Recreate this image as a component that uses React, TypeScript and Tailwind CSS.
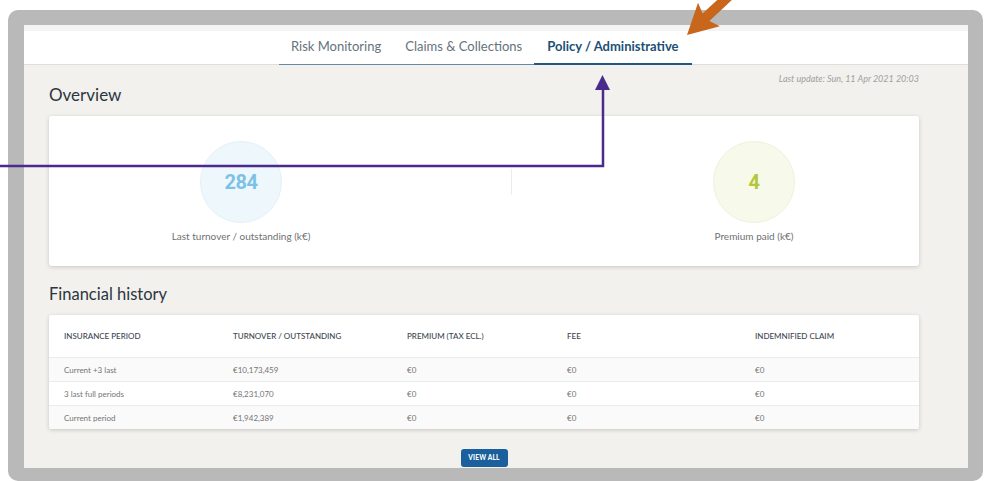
import React from "react";

const tabs = [
  { label: "Risk Monitoring", active: false },
  { label: "Claims & Collections", active: false },
  { label: "Policy / Administrative", active: true },
];

const columns = ["Insurance period", "Turnover / outstanding", "Premium (tax ecl.)", "Fee", "Indemnified claim"];

const rows = [
  ["Current +3 last", "€10,173,459", "€0", "€0", "€0"],
  ["3 last full periods", "€8,231,070", "€0", "€0", "€0"],
  ["Current period", "€1,942,389", "€0", "€0", "€0"],
];

const KpiCircle: React.FC<{ value: string; label: string; tone: "blue" | "green" }> = ({ value, label, tone }) => (
  <div className="flex flex-col items-center">
    <div
      className={`w-[82px] h-[82px] rounded-full flex items-center justify-center border ${
        tone === "blue" ? "bg-[#eef7fc] border-[#e2f0f9]" : "bg-[#f7f9ea] border-[#eef2d9]"
      }`}
    >
      <span
        className={`font-['Roboto',sans-serif] font-bold text-[20px] leading-none tracking-[-0.5px] ${
          tone === "blue" ? "text-[#7cc2e8]" : "text-[#b3c739]"
        }`}
      >
        {value}
      </span>
    </div>
    <span className="mt-[7px] text-[10px] leading-[13px] text-[#707070]">{label}</span>
  </div>
);

export default function App() {
  return (
    <div className="relative w-[989px] h-[481px] overflow-hidden bg-white font-['Lato',sans-serif]">
      {/* device frame */}
      <div className="ml-[8px] mt-[10px] w-[975px] h-[471px] bg-[#b9b9b9] rounded-[10px] pt-[15px] pl-[16px] pr-[15px] pb-[13px]">
        <div className="w-[944px] h-[443px] bg-[#f2f1ed] flex flex-col">
          <div className="h-[6px] bg-[#f4f4f4]" />
          {/* tab bar */}
          <div className="h-[34px] bg-white border-b border-[#dedede] flex pl-[255px]">
            {tabs.map((t) => (
              <div
                key={t.label}
                className={`h-[34px] flex items-center -mb-px ${
                  t.active
                    ? "px-[13px] border-b-2 border-[#1f5883] text-[#1d4f75] font-bold"
                    : "px-[12px] border-b border-[#6689a3] text-[#66727b]"
                } text-[13px]`}
              >
                <span className="pb-[1px]">{t.label}</span>
              </div>
            ))}
          </div>

          <div className="pl-[25px] pr-[49px] flex flex-col">
            <div className="pt-[8px] h-[20px] text-right text-[9px] leading-[12px] italic text-[#a0a0a0]">
              Last update: Sun, 11 Apr 2021 20:03
            </div>
            <h2 className="text-[17px] leading-[20px] text-[#2b3640]">Overview</h2>

            {/* overview card */}
            <div className="mt-[11px] h-[150px] bg-white rounded-[3px] shadow-[0_1px_4px_rgba(0,0,0,0.18)] grid grid-cols-[384px_156px_1fr] pt-[25px]">
              <KpiCircle value="284" label="Last turnover / outstanding (k€)" tone="blue" />
              <div className="flex justify-center pt-[28px]">
                <div className="w-px h-[26px] bg-[#ececec]" />
              </div>
              <KpiCircle value="4" label="Premium paid (k€)" tone="green" />
            </div>

            <h2 className="mt-[17px] text-[16.5px] leading-[22px] text-[#2b3640]">Financial history</h2>

            {/* history table */}
            <div className="mt-[10px] bg-white rounded-[3px] shadow-[0_1px_4px_rgba(0,0,0,0.18)] overflow-hidden">
              <div className="h-[42px] grid grid-cols-[169px_174px_160px_188px_1fr] pl-[15px] items-center">
                {columns.map((c) => (
                  <span key={c} className="text-[8px] uppercase font-medium text-[#3b4650]">
                    {c}
                  </span>
                ))}
              </div>
              {rows.map((r, i) => (
                <div
                  key={r[0]}
                  className={`h-[24px] grid grid-cols-[169px_174px_160px_188px_1fr] pl-[15px] items-center border-t border-[#ebebeb] ${
                    i % 2 === 0 ? "bg-[#fafafa]" : "bg-white"
                  }`}
                >
                  {r.map((cell, j) => (
                    <span key={j} className="text-[8px] text-[#747474]">
                      {cell}
                    </span>
                  ))}
                </div>
              ))}
            </div>

            <div className="mt-[20px] flex justify-center">
              <button className="w-[47px] h-[18px] rounded-[3px] bg-[#1b5f9c] text-white text-[6.5px] font-black tracking-[0.2px]">
                VIEW ALL
              </button>
            </div>
          </div>
        </div>
      </div>

      {/* callout arrows */}
      <svg className="absolute inset-0 pointer-events-none" width="989" height="481" viewBox="0 0 989 481">
        <path d="M0 166 H603 V88" fill="none" stroke="#4a2b8d" strokeWidth="2.5" />
        <polygon points="602.5,75 595,90 610,90" fill="#4a2b8d" />
        <g transform="translate(687 35) rotate(137)">
          <polygon points="0,0 -30,-16 -26,-5 -75,-5 -75,5 -26,5 -30,16" fill="#c8661c" />
        </g>
      </svg>
    </div>
  );
}
